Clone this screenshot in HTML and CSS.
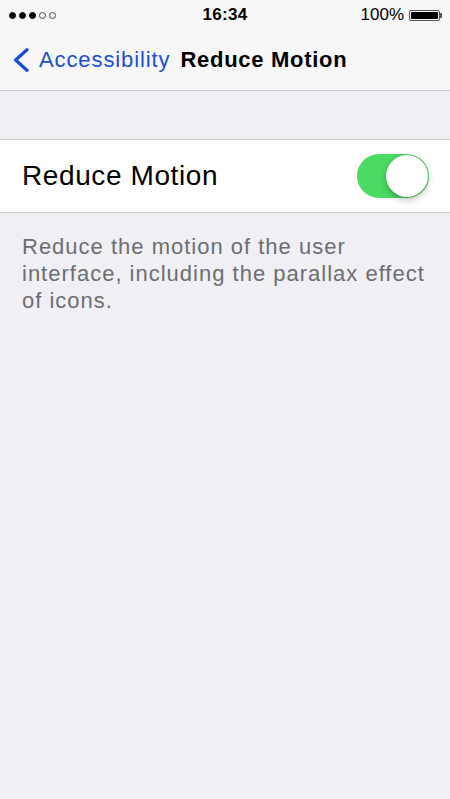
FILE: index.html
```html
<!DOCTYPE html>
<html lang="en">
<head>
    <meta charset="UTF-8">
    <meta name="viewport" content="width=device-width, initial-scale=1.0">
    <title>Reduce Motion</title>
    <link rel="stylesheet" href="styles.css">
</head>
<body>
    <div class="top-bar">
        <div class="status-bar">
            <div class="signal">
                <span class="dot on"></span><span class="dot on"></span><span class="dot on"></span><span class="dot"></span><span class="dot"></span>
            </div>
            <div class="time">16:34</div>
            <div class="battery-wrap">
                <span class="percent">100%</span>
                <span class="battery"><span class="battery-fill"></span></span>
                <span class="battery-tip"></span>
            </div>
        </div>
        <div class="nav-bar">
            <a class="back" href="#">
                <svg class="chevron" width="18" height="24" viewBox="0 0 18 24">
                    <path d="M15 1.8 L3.6 12 L15 22.2" fill="none" stroke="#1d4fcf" stroke-width="3.3" stroke-linecap="round" stroke-linejoin="round"/>
                </svg>
                <span>Accessibility</span>
            </a>
            <span class="title">Reduce Motion</span>
        </div>
    </div>

    <div class="group">
        <div class="cell">
            <span class="cell-label">Reduce Motion</span>
            <div class="switch on"><div class="knob"></div></div>
        </div>
    </div>
    <p class="footer">Reduce the motion of the user interface, including the parallax effect of icons.</p>
</body>
</html>
```

FILE: styles.css
```css
:root {
    --bg: #efeff4;
    --line: #c8c7cc;
    --blue: #1d4fcf;
}

body {
    margin: 0;
    background: var(--bg);
    font-family: 'Liberation Sans', Arial, sans-serif;
    color: #000;
    min-height: 799px;
}

.top-bar {
    background: #f7f7f7;
    border-bottom: 1px solid var(--line);
}

.status-bar {
    height: 30px;
    display: flex;
    align-items: center;
    justify-content: space-between;
    padding: 0 8px 0 9px;
    position: relative;
}

.signal {
    display: flex;
    gap: 3px;
}

.dot {
    width: 5px;
    height: 5px;
    border-radius: 50%;
    border: 1px solid #444;
    box-sizing: content-box;
}

.dot.on {
    background: #000;
    border-color: #000;
}

.time {
    position: absolute;
    left: 0;
    right: 0;
    text-align: center;
    font-size: 17px;
    font-weight: 700;
    letter-spacing: 0.3px;
    pointer-events: none;
}

.battery-wrap {
    display: flex;
    align-items: center;
}

.percent {
    font-size: 17px;
    margin-right: 5px;
}

.battery {
    width: 27px;
    height: 7px;
    border: 1px solid #555;
    border-radius: 2px;
    padding: 1px;
    display: flex;
}

.battery-fill {
    flex: 1;
    background: #000;
    border-radius: 1px;
}

.battery-tip {
    width: 2px;
    height: 5px;
    background: #555;
    border-radius: 0 1px 1px 0;
}

.nav-bar {
    height: 60px;
    display: flex;
    align-items: center;
    padding: 0 0 0 12px;
}

.back {
    display: flex;
    align-items: center;
    color: var(--blue);
    text-decoration: none;
    font-size: 22px;
    letter-spacing: 0.9px;
}

.chevron {
    margin-right: 9px;
}

.title {
    margin-left: 10px;
    font-size: 22px;
    font-weight: 700;
    letter-spacing: 0.7px;
}

.group {
    margin-top: 48px;
    background: #fff;
    border-top: 1px solid var(--line);
    border-bottom: 1px solid var(--line);
}

.cell {
    height: 72px;
    display: flex;
    align-items: center;
    justify-content: space-between;
    padding: 0 21px 0 22px;
}

.cell-label {
    font-size: 28px;
    letter-spacing: 0.6px;
}

.switch {
    width: 72px;
    height: 44px;
    border-radius: 22px;
    background: #4cd964;
    display: flex;
    align-items: center;
    justify-content: flex-end;
    padding: 1px;
    box-sizing: border-box;
}

.knob {
    width: 42px;
    height: 42px;
    border-radius: 50%;
    background: #fff;
    box-shadow: 0 3px 6px rgba(0, 0, 0, 0.25), 0 0 1px rgba(0, 0, 0, 0.2);
}

.footer {
    margin: 20px 22px 0;
    font-size: 22px;
    line-height: 27px;
    letter-spacing: 1px;
    color: #6d6d72;
}
```
